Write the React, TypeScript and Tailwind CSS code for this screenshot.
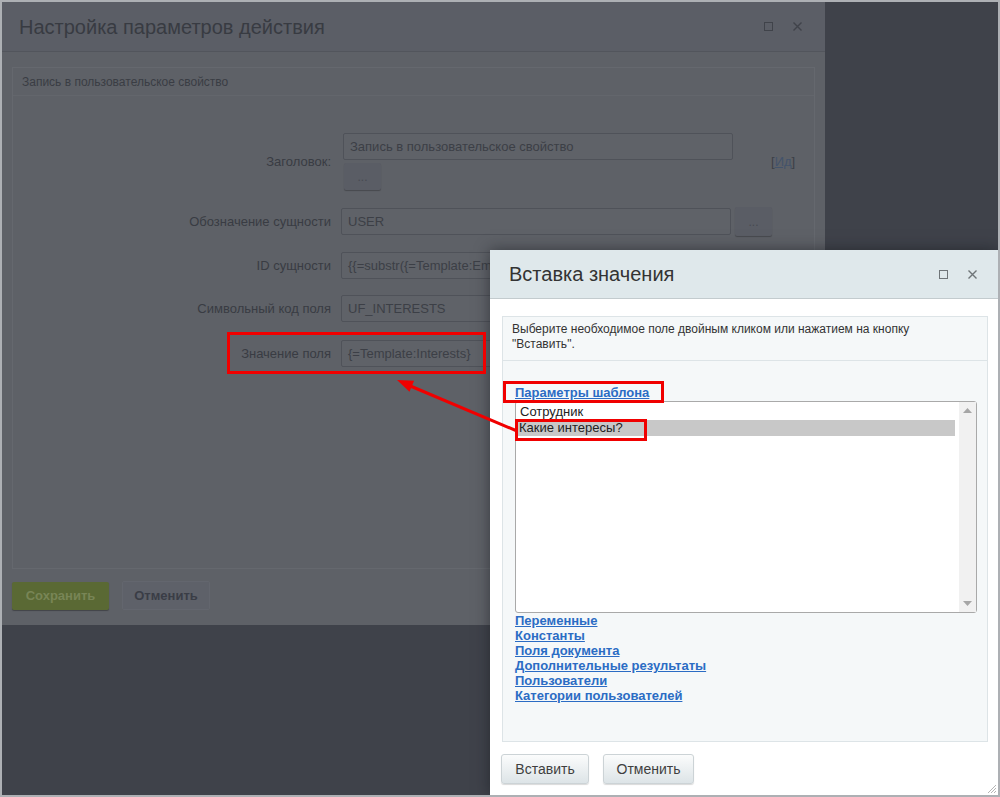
import React from 'react';

const fields = [
  { label: 'Обозначение сущности', value: 'USER', more: true, mt: 'mt-[17px]' },
  { label: 'ID сущности', value: '{{=substr({=Template:Em', more: false, mt: 'mt-[16px]' },
  { label: 'Символьный код поля', value: 'UF_INTERESTS', more: false, mt: 'mt-[16px]' },
  { label: 'Значение поля', value: '{=Template:Interests}', more: false, mt: 'mt-[18px]' },
];

const links = [
  'Переменные',
  'Константы',
  'Поля документа',
  'Дополнительные результаты',
  'Пользователи',
  'Категории пользователей',
];

function WinIcons({ color }: { color: string }) {
  return (
    <div className="flex items-center gap-[20px]">
      <svg width="9" height="9" viewBox="0 0 9 9">
        <rect x="0.5" y="0.5" width="8" height="8" fill="none" stroke={color} strokeWidth="1" />
      </svg>
      <svg width="9" height="9" viewBox="0 0 9 9">
        <path d="M0.5 0.5 L8.5 8.5 M8.5 0.5 L0.5 8.5" stroke={color} strokeWidth="1.4" />
      </svg>
    </div>
  );
}

function BackDialog() {
  return (
    <div className="absolute left-0 top-0 flex h-[623px] w-[823px] flex-col bg-[#5e6167]">
      <div className="flex h-[50px] items-center justify-between border-b border-[#52555c] bg-[#5b5e66] pl-[17px] pr-[23px]">
        <span className="text-[20px] text-[#383b42]">Настройка параметров действия</span>
        <WinIcons color="#40434a" />
      </div>
      <div className="px-[10px] pt-[15px]">
        <div className="h-[502px] border border-[#65686e] bg-[#5e6167]">
          <div className="flex h-[28px] items-center border-b border-[#63666c] px-[9px] text-[12px] text-[#3a3d44]">
            Запись в пользовательское свойство
          </div>
          <div className="mt-[37px] flex items-center">
            <div className="w-[318px] text-right text-[13px] text-[#393c43]">Заголовок:</div>
            <div className="ml-[12px] flex flex-col">
              <div className="flex h-[27px] w-[390px] items-center rounded-[2px] border border-[#4f5259] bg-[#5f6268] px-[6px] text-[13px] text-[#3c3f46]">
                Запись в пользовательское свойство
              </div>
              <div className="ml-[1px] mt-[3px] flex h-[27px] w-[37px] items-center justify-center rounded-[2px] bg-[#5a5d65] text-[12px] text-[#474a51] shadow-[0_1px_1px_rgba(0,0,0,0.25)]">
                ...
              </div>
            </div>
            <div className="ml-[38px] text-[13px] text-[#3c3f46]">
              [<span className="text-[#43536b] underline">Ид</span>]
            </div>
          </div>
          {fields.map((f) => (
            <div key={f.label} className={`${f.mt} flex items-center`}>
              <div className="w-[318px] text-right text-[13px] text-[#393c43]">{f.label}</div>
              <div className="ml-[10px] flex h-[27px] w-[390px] items-center overflow-hidden whitespace-nowrap rounded-[2px] border border-[#4f5259] bg-[#5f6268] px-[6px] text-[13px] text-[#3c3f46]">
                {f.value}
              </div>
              {f.more && (
                <div className="ml-[4px] flex h-[29px] w-[37px] items-center justify-center rounded-[2px] bg-[#5a5d65] text-[12px] text-[#474a51] shadow-[0_1px_1px_rgba(0,0,0,0.25)]">
                  ...
                </div>
              )}
            </div>
          ))}
        </div>
        <div className="mt-[12px] flex items-center gap-[13px]">
          <div className="flex h-[28px] w-[97px] items-center justify-center rounded-[2px] bg-[#5a6934] text-[13px] font-bold text-[#788556] shadow-[0_1px_1px_rgba(0,0,0,0.3)]">
            Сохранить
          </div>
          <div className="flex h-[29px] w-[88px] items-center justify-center rounded-[2px] border border-[#63666e] bg-[#5e6169] text-[13px] font-bold text-[#3a3d46]">
            Отменить
          </div>
        </div>
      </div>
    </div>
  );
}

function Triangle({ up }: { up: boolean }) {
  return (
    <svg width="9" height="5" viewBox="0 0 9 5">
      <path d={up ? 'M0 5 L4.5 0 L9 5 Z' : 'M0 0 L4.5 5 L9 0 Z'} fill="#a6a6a6" />
    </svg>
  );
}

function InsertDialog() {
  return (
    <div className="absolute left-[488px] top-[248px] flex h-[545px] w-[508px] flex-col bg-white shadow-[0_0_14px_rgba(20,24,30,0.55)]">
      <div className="flex h-[49px] shrink-0 items-center justify-between border-b border-[#c3cbce] bg-[#dfe8eb] pl-[19px] pr-[21px]">
        <span className="text-[20px] text-[#333333]">Вставка значения</span>
        <WinIcons color="#6f7578" />
      </div>
      <div className="ml-[12px] mr-[10px] mt-[17px] h-[426px] border border-[#dde4e7] bg-[#f5f8f9]">
        <div className="border-b border-[#dde4e7] pb-[8px] pl-[9px] pt-[5px]">
          <p className="max-w-[420px] text-[12px] leading-[15px] text-[#333333]">
            Выберите необходимое поле двойным кликом или нажатием на кнопку "Вставить".
          </p>
        </div>
        <div className="pl-[12px] pt-[24px]">
          <div className="text-[13px] font-bold leading-[15px] text-[#2b6cc4] underline">Параметры шаблона</div>
          <div className="mt-[1px] flex h-[212px] w-[462px] rounded-[3px] border border-[#a9a9a9] bg-white">
            <div className="flex flex-1 flex-col pl-[1px] pr-[4px] pt-[2px]">
              <div className="h-[16px] px-[3px] text-[13px] leading-[16px] text-[#222222]">Сотрудник</div>
              <div className="h-[16px] bg-[#c8c8c8] px-[2px] text-[13px] leading-[16px] text-[#222222]">Какие интересы?</div>
            </div>
            <div className="flex w-[17px] flex-col items-center justify-between bg-[#f1f1f1] py-[6px]">
              <Triangle up />
              <Triangle up={false} />
            </div>
          </div>
          <div className="flex flex-col items-start">
            {links.map((l) => (
              <span key={l} className="text-[13px] font-bold leading-[15px] text-[#2b6cc4] underline">
                {l}
              </span>
            ))}
          </div>
        </div>
      </div>
      <div className="ml-[11px] mt-[12px] flex gap-[14px]">
        <div className="flex h-[30px] w-[88px] items-center justify-center rounded-[3px] border border-[#ccd3d6] bg-gradient-to-b from-[#fbfcfc] to-[#dde4e7] text-[14px] text-[#3f3f3f] shadow-[0_1px_1px_rgba(0,0,0,0.15)]">
          Вставить
        </div>
        <div className="flex h-[30px] w-[91px] items-center justify-center rounded-[3px] border border-[#ccd3d6] bg-gradient-to-b from-[#fbfcfc] to-[#dde4e7] text-[14px] text-[#3f3f3f] shadow-[0_1px_1px_rgba(0,0,0,0.15)]">
          Отменить
        </div>
      </div>
      <svg className="absolute bottom-[1px] right-[1px]" width="11" height="11" viewBox="0 0 11 11">
        <path d="M10 2 L2 10 M10 5 L5 10 M10 8 L8 10" stroke="#b5b5b5" strokeWidth="1" />
      </svg>
    </div>
  );
}

function Annotations() {
  return (
    <svg className="pointer-events-none absolute left-[-2px] top-[-2px]" width="1000" height="797" viewBox="0 0 1000 797">
      <g fill="none" stroke="#f00000" strokeWidth="3">
        <rect x="228.5" y="333.5" width="256" height="39" />
        <rect x="504.5" y="382.5" width="158" height="19" />
        <rect x="516.5" y="420.5" width="129" height="19" />
        <line x1="517" y1="431" x2="408" y2="385" />
      </g>
      <polygon points="397,380 409.5,391.7 414.1,380.7" fill="#f00000" />
    </svg>
  );
}

export default function App() {
  return (
    <div className="relative h-[797px] w-[1000px] overflow-hidden border-2 border-[#adb0b4] bg-[#3f424a] font-['Liberation_Sans',Arial,sans-serif]">
      <BackDialog />
      <InsertDialog />
      <Annotations />
    </div>
  );
}
